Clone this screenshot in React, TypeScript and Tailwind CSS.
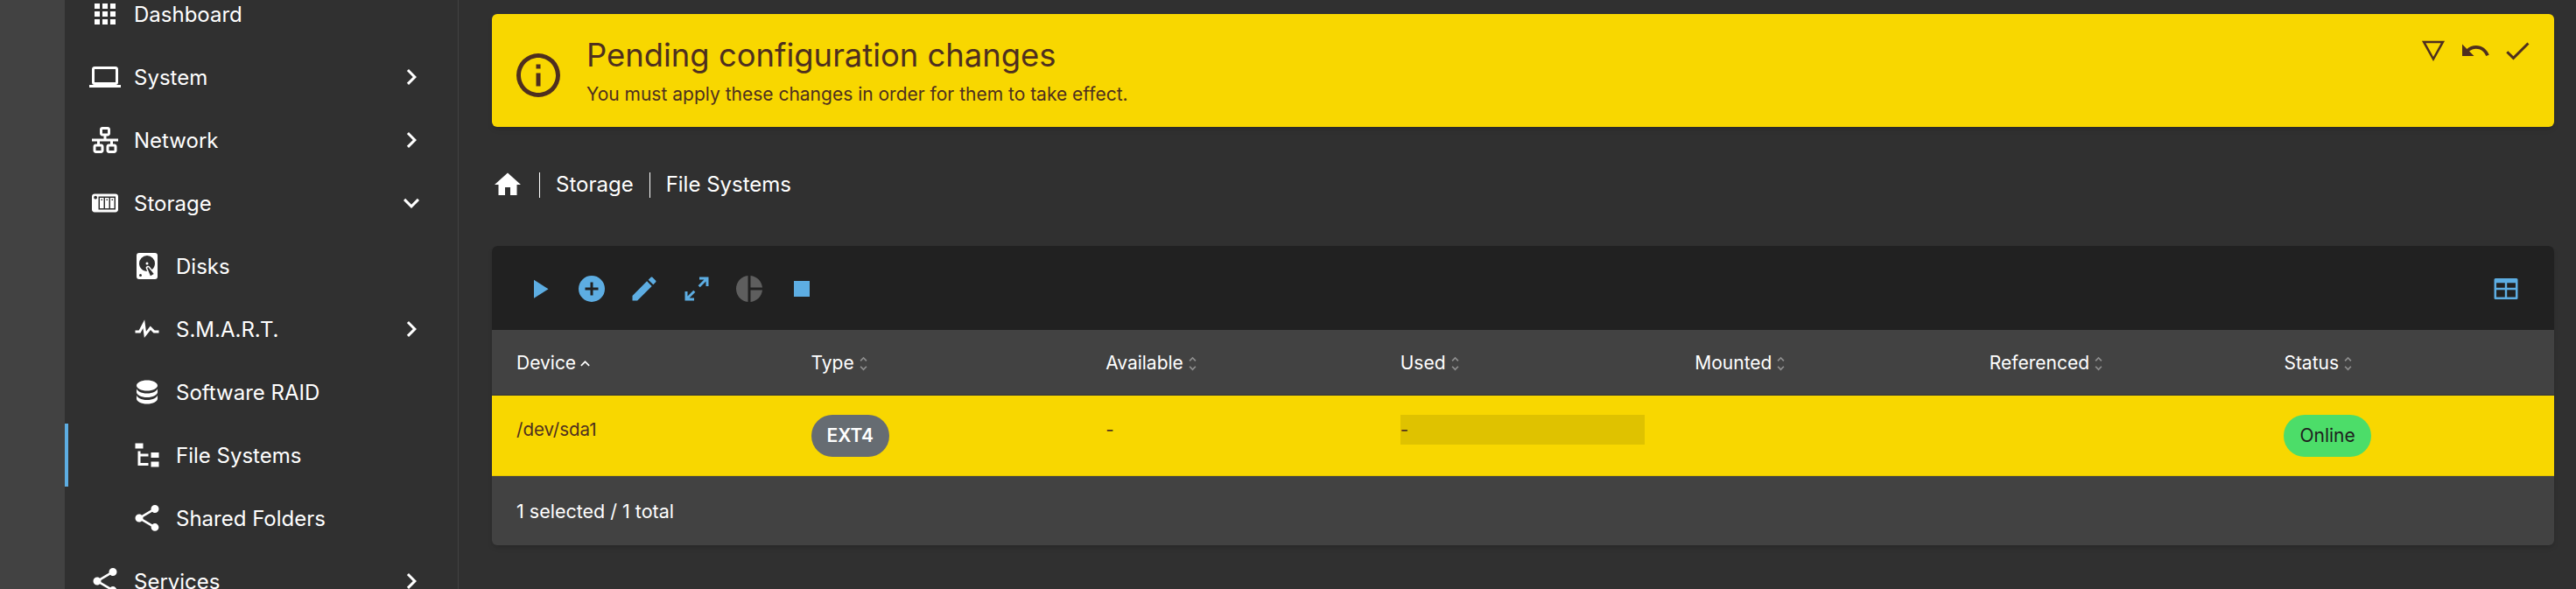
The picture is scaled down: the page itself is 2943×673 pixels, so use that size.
const paths = {
  apps: "M16,20H20V16H16M16,14H20V10H16M10,8H14V4H10M16,8H20V4H16M10,14H14V10H10M4,14H8V10H4M4,20H8V16H4M10,20H14V16H10M4,8H8V4H4V8Z",
  laptop: "M4,6H20V16H4M20,18A2,2 0 0,0 22,16V6C22,4.89 21.1,4 20,4H4C2.89,4 2,4.89 2,6V16A2,2 0 0,0 4,18H0V20H24V18H20Z",
  lan: "M10,2C8.89,2 8,2.89 8,4V7C8,8.11 8.89,9 10,9H11V11H2V13H6V15H5C3.89,15 3,15.89 3,17V20C3,21.11 3.89,22 5,22H9C10.11,22 11,21.11 11,20V17C11,15.89 10.11,15 9,15H8V13H16V15H15C13.89,15 13,15.89 13,17V20C13,21.11 13.89,22 15,22H19C20.11,22 21,21.11 21,20V17C21,15.89 20.11,15 19,15H18V13H22V11H13V9H14C15.11,9 16,8.11 16,7V4C16,2.89 15.11,2 14,2H10M10,4H14V7H10V4M5,17H9V20H5V17M15,17H19V20H15V17Z",
  nas: "M4 5C2.89 5 2 5.89 2 7V17C2 18.11 2.89 19 4 19H20C21.11 19 22 18.11 22 17V7C22 5.89 21.11 5 20 5H4M4.75 6.5C5.44 6.5 6 7.06 6 7.75C6 8.44 5.44 9 4.75 9C4.06 9 3.5 8.44 3.5 7.75C3.5 7.06 4.06 6.5 4.75 6.5M7 7H20V17H7V7M8 8V16H11V8H8M12 8V16H15V8H12M16 8V16H19V8H16M9 9H10V10H9V9M13 9H14V10H13V9M17 9H18V10H17V9Z",
  harddisk: "M6,2H18A2,2 0 0,1 20,4V20A2,2 0 0,1 18,22H6A2,2 0 0,1 4,20V4A2,2 0 0,1 6,2M12,4A6,6 0 0,0 6,10C6,13.31 8.69,16 12.1,16L11.22,13.77C10.95,13.29 11.11,12.68 11.59,12.4L12.45,11.9C12.93,11.63 13.54,11.79 13.82,12.27L15.74,14.69C17.12,13.59 18,11.9 18,10A6,6 0 0,0 12,4M12,9A1,1 0 0,1 13,10A1,1 0 0,1 12,11A1,1 0 0,1 11,10A1,1 0 0,1 12,9M7,18A1,1 0 0,0 6,19A1,1 0 0,0 7,20A1,1 0 0,0 8,19A1,1 0 0,0 7,18M12.09,13.27L14.58,19.58L17.17,18.08L12.95,12.77L12.09,13.27Z",
  pulse: "M3,13H5.79L10.1,4.79L11.28,13.75L14.5,9.66L17.83,13H21V15H17L14.67,12.67L9.92,18.73L8.94,11.31L7,15H3V13Z",
  database: "M12,3C7.58,3 4,4.79 4,7C4,9.21 7.58,11 12,11C16.42,11 20,9.21 20,7C20,4.79 16.42,3 12,3M4,9V12C4,14.21 7.58,16 12,16C16.42,16 20,14.21 20,12V9C20,11.21 16.42,13 12,13C7.58,13 4,11.21 4,9M4,14V17C4,19.21 7.58,21 12,21C16.42,21 20,19.21 20,17V14C20,16.21 16.42,18 12,18C7.58,18 4,16.21 4,14Z",
  fileTree: "M3,3H9V7H3V3M15,10H21V14H15V10M15,17H21V21H15V17M13,13H7V18H13V20H7L5,20V9H7V11H13V13Z",
  share: "M18,16.08C17.24,16.08 16.56,16.38 16.04,16.85L8.91,12.7C8.96,12.47 9,12.24 9,12C9,11.76 8.96,11.53 8.91,11.3L15.96,7.19C16.5,7.69 17.21,8 18,8A3,3 0 0,0 21,5A3,3 0 0,0 18,2A3,3 0 0,0 15,5C15,5.24 15.04,5.47 15.09,5.7L8.04,9.81C7.5,9.31 6.79,9 6,9A3,3 0 0,0 3,12A3,3 0 0,0 6,15C6.79,15 7.5,14.69 8.04,14.19L15.16,18.34C15.11,18.55 15.08,18.77 15.08,19C15.08,20.61 16.39,21.91 18,21.91C19.61,21.91 20.92,20.61 20.92,19A2.92,2.92 0 0,0 18,16.08Z",
  chevronRight: "M8.59,16.58L13.17,12L8.59,7.41L10,6L16,12L10,18L8.59,16.58Z",
  chevronDown: "M7.41,8.58L12,13.17L16.59,8.58L18,10L12,16L6,10L7.41,8.58Z",
  chevronUp: "M7.41,15.41L12,10.83L16.59,15.41L18,14L12,8L6,14L7.41,15.41Z",
  unfold: "M12,18.17L8.83,15L7.41,16.41L12,21L16.59,16.41L15.17,15M12,5.83L15.17,9L16.59,7.59L12,3L7.41,7.59L8.83,9L12,5.83Z",
  home: "M10,20V14H14V20H19V12H22L12,3L2,12H5V20H10Z",
  info: "M11,9H13V7H11M12,20C7.59,20 4,16.41 4,12C4,7.59 7.59,4 12,4C16.41,4 20,7.59 20,12C20,16.41 16.41,20 12,20M12,2A10,10 0 0,0 2,12A10,10 0 0,0 12,22A10,10 0 0,0 22,12A10,10 0 0,0 12,2M11,17H13V11H11V17Z",
  triangleDown: "M3.3,4.5H20.7L12,20L3.3,4.5ZM6.2,6.2L12,16.6L17.8,6.2H6.2Z",
  undo: "M12.5,8C9.85,8 7.45,9 5.6,10.6L2,7V16H11L7.38,12.38C8.77,11.22 10.54,10.5 12.5,10.5C16.04,10.5 19.05,12.81 20.1,16L22.47,15.22C21.08,11.03 17.15,8 12.5,8Z",
  check: "M21,7L9,19L3.5,13.5L4.91,12.09L9,16.17L19.59,5.59L21,7Z",
  play: "M8,5.14V19.14L19,12.14L8,5.14Z",
  plusCircle: "M12,2A10,10 0 0,0 2,12A10,10 0 0,0 12,22A10,10 0 0,0 22,12A10,10 0 0,0 12,2M17,13H13V17H11V13H7V11H11V7H13V11H17V13Z",
  pencil: "M20.71,7.04C21.1,6.65 21.1,6 20.71,5.63L18.37,3.29C18,2.9 17.35,2.9 16.96,3.29L15.12,5.12L18.87,8.87M3,17.25V21H6.75L17.81,9.93L14.06,6.18L3,17.25Z",
  expand: "M10,21V19H6.41L10.91,14.5L9.5,13.09L5,17.59V14H3V21H10M14.5,10.91L19,6.41V10H21V3H14V5H17.59L13.09,9.5L14.5,10.91Z",
  pie: "M11,2V22C5.9,21.5 2,17.2 2,12C2,6.8 5.9,2.5 11,2M13,2V11H22C21.5,6.2 17.8,2.5 13,2M13,13V22C17.7,21.5 21.5,17.8 22,13H13Z",
  stop: "M18,18H6V6H18V18Z",
  tableLarge: "M4,4H20A1,1 0 0,1 21,5V19A1,1 0 0,1 20,20H4A1,1 0 0,1 3,19V5A1,1 0 0,1 4,4M4.7,7.5V11.2H11.2V7.5H4.7M12.8,7.5V11.2H19.3V7.5H12.8M4.7,12.8V18.3H11.2V12.8H4.7M12.8,12.8V18.3H19.3V12.8H12.8Z",
};

const Icon = ({ d, className }: { d: string; className: string }) => (
  <svg viewBox="0 0 24 24" fill="currentColor" fillRule="evenodd" className={`shrink-0 ${className}`}>
    <path d={d} />
  </svg>
);

const menu = [
  { label: "Dashboard", icon: paths.apps },
  { label: "System", icon: paths.laptop, arrow: "right" },
  { label: "Network", icon: paths.lan, arrow: "right" },
  { label: "Storage", icon: paths.nas, arrow: "down" },
  { label: "Disks", icon: paths.harddisk, sub: true },
  { label: "S.M.A.R.T.", icon: paths.pulse, sub: true, arrow: "right" },
  { label: "Software RAID", icon: paths.database, sub: true },
  { label: "File Systems", icon: paths.fileTree, sub: true, active: true },
  { label: "Shared Folders", icon: paths.share, sub: true },
  { label: "Services", icon: paths.share, arrow: "right" },
];

const columns = ["Device", "Type", "Available", "Used", "Mounted", "Referenced", "Status"];

const toolbar = [
  { d: paths.play, color: "text-[#5dade2]" },
  { d: paths.plusCircle, color: "text-[#5dade2]" },
  { d: paths.pencil, color: "text-[#5dade2]" },
  { d: paths.expand, color: "text-[#5dade2]" },
  { d: paths.pie, color: "text-[#5e5e5e]" },
  { d: paths.stop, color: "text-[#5dade2]" },
];

const Sidebar = () => (
  <nav className="w-[450px] shrink-0 border-r border-[#424242] pr-[35px] text-[24px] text-white">
    <ul className="-mt-5">
      {menu.map((item) => (
        <li
          key={item.label}
          className={`flex h-[72px] items-center gap-[15px] border-l-4 ${item.active ? "border-[#5dade2]" : "border-transparent"} ${item.sub ? "pl-[72px]" : "pl-6"}`}
        >
          <Icon d={item.icon} className="size-9" />
          <span className="flex-1 pt-[2px]">{item.label}</span>
          {item.arrow && (
            <Icon d={item.arrow === "down" ? paths.chevronDown : paths.chevronRight} className="size-9" />
          )}
        </li>
      ))}
    </ul>
  </nav>
);

const Banner = () => (
  <div className="flex h-[129px] rounded-md bg-[#f8d700] pl-[23px] pr-[24px] text-[#4e2f1f] shadow-md">
    <Icon d={paths.info} className="mt-[40px] size-[60px]" />
    <div className="ml-[25px] flex-1">
      <h1 className="mt-[26px] text-[36.4px] leading-[42px]">Pending configuration changes</h1>
      <p className="mt-[9px] text-[21px] leading-[30px]">You must apply these changes in order for them to take effect.</p>
    </div>
    <div className="mt-[24px] flex gap-[12px]">
      <Icon d={paths.triangleDown} className="size-9" />
      <Icon d={paths.undo} className="size-9" />
      <Icon d={paths.check} className="size-9" />
    </div>
  </div>
);

const Breadcrumb = () => (
  <div className="mt-[48px] flex h-9 items-center text-[24px] text-white">
    <Icon d={paths.home} className="size-9" />
    <span className="ml-[18px] h-[29px] w-px bg-white" />
    <span className="ml-[18px] mr-[18px]">Storage</span>
    <span className="h-[29px] w-px bg-white" />
    <span className="ml-[18px]">File Systems</span>
  </div>
);

const FileSystemsTable = () => (
  <section className="mt-[52px] overflow-hidden rounded-md bg-[#424242] text-white shadow-md">
    <div className="flex h-[96px] items-center justify-between bg-[#212121] pl-[36px] pr-[37px]">
      <div className="mt-[2px] flex gap-6">
        {toolbar.map((tool, i) => (
          <Icon key={i} d={tool.d} className={`size-9 ${tool.color}`} />
        ))}
      </div>
      <Icon d={paths.tableLarge} className="mt-[2px] size-9 text-[#5dade2]" />
    </div>

    <div className="grid h-[75px] grid-cols-7 items-center border-b border-[#333333] pt-[2px] text-[21px]">
      {columns.map((col, i) => (
        <div key={col} className="flex items-center pl-7">
          <span>{col}</span>
          {i === 0 ? (
            <Icon d={paths.chevronUp} className="size-[21px]" />
          ) : (
            <Icon d={paths.unfold} className="size-[21px] text-[#8e8e8e]" />
          )}
        </div>
      ))}
    </div>

    <div className="grid h-[92px] grid-cols-7 items-start border-b border-[#e3c500] bg-[#f8d700] pt-[22px] text-[20.5px] leading-[34px] text-[#4e2f1f]">
      <div className="pl-7">/dev/sda1</div>
      <div className="pl-7">
        <span className="inline-flex h-12 items-center rounded-3xl bg-[#666c72] px-[18px] text-[21px] font-semibold text-white">EXT4</span>
      </div>
      <div className="pl-7">-</div>
      <div className="pl-7">
        <div className="flex h-[34px] w-[279px] items-center bg-[#dfc200] text-[#4e2f1f]">-</div>
      </div>
      <div />
      <div />
      <div className="pl-7">
        <span className="inline-flex h-12 items-center rounded-3xl bg-[#4cdd69] px-[18px] text-[21px] text-[#1e1e1e]">Online</span>
      </div>
    </div>

    <div className="flex h-[79px] items-center pl-7 pt-[2px] text-[21.5px]">1 selected / 1 total</div>
  </section>
);

export default function App() {
  return (
    <div className="flex h-[673px] overflow-hidden bg-[#303030] font-['Inter',sans-serif]">
      <div className="w-[74px] shrink-0 bg-[#424242]" />
      <Sidebar />
      <main className="min-w-0 flex-1 pl-[38px] pr-[25px] pt-4">
        <Banner />
        <Breadcrumb />
        <FileSystemsTable />
      </main>
    </div>
  );
}
